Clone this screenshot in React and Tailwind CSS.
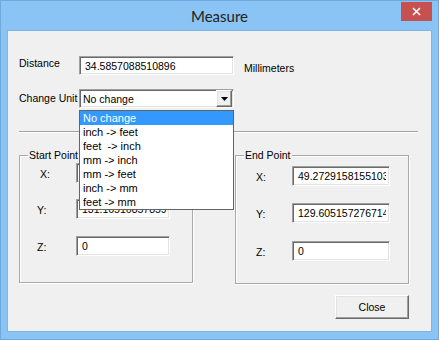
import React from 'react';

// sunken edit box / raised button edges, classic Windows look
const sunken =
  'bg-white border border-t-[#a0a0a0] border-l-[#a0a0a0] border-r-white border-b-white shadow-[inset_1px_1px_0_#696969,inset_-1px_-1px_0_#e3e3e3]';
const raised =
  'bg-[#f0f0f0] border border-t-white border-l-white border-r-[#696969] border-b-[#696969] shadow-[inset_-1px_-1px_0_#a0a0a0,inset_1px_1px_0_#e3e3e3]';

const units = ['No change', 'inch -> feet', 'feet  -> inch', 'mm -> inch', 'mm -> feet', 'inch -> mm', 'feet -> mm'];

const Field = ({ value, className }) => (
  <div className={`${sunken} h-[20px] flex items-center pl-[5px] pr-[3px] pt-[1px] ${className}`}>
    <div className="flex-1 min-w-0 overflow-hidden whitespace-nowrap">{value}</div>
  </div>
);

const Row = ({ label, value, pad, width, className = '' }) => (
  <div className={`flex items-start ${className}`}>
    <div className={`w-[56px] pt-[5px] ${pad}`}>{label}</div>
    <Field value={value} className={width} />
  </div>
);

const Group = ({ title, children, className }) => (
  <div className={`relative w-[174px] border border-[#a9a9a9] shadow-[inset_1px_1px_0_#fff,1px_1px_0_#fff] ${className}`}>
    <div className="absolute -top-[7px] left-[8px] px-[1px] bg-[#f0f0f0] whitespace-nowrap">{title}</div>
    {children}
  </div>
);

export default function App() {
  return (
    <div className="w-[439px] h-[340px] bg-[#89c4f5] border border-[#6fa8dc] flex flex-col font-['Liberation_Sans',Arial,sans-serif] text-[10.5px] leading-[13px] text-black">
      {/* ── Title bar ── */}
      <div className="h-[29px] grid grid-cols-[1fr_auto_1fr] items-center">
        <div />
        <div className="font-['Lato',sans-serif] text-[15px] leading-[18px] text-[#222] pt-[1px]">Measure</div>
        <button className="justify-self-end self-start mt-[1px] mr-[6px] w-[31px] h-[19px] bg-[#c75050] flex items-center justify-center">
          <svg width="9" height="9" viewBox="0 0 9 9">
            <path d="M1 1L8 8M8 1L1 8" stroke="#fff" strokeWidth="1.6" />
          </svg>
        </button>
      </div>

      {/* ── Client area ── */}
      <div className="mx-[6px] mb-[7px] flex-1 border border-[#7fb5e4] bg-[#f0f0f0] flex flex-col pt-[25px]">
        <div className="flex items-start pl-[11px]">
          <div className="w-[60px] pt-[1px]">Distance</div>
          <div className={`${sunken} w-[155px] h-[19px] flex items-center pl-[5px] pt-[1px]`}>34.5857088510896</div>
          <div className="ml-[10px] mt-[6px]">Millimeters</div>
        </div>

        <div className="mt-[14px] flex items-start pl-[11px]">
          <div className="w-[60px] pt-[3px] whitespace-nowrap">Change Unit</div>
          <div className={`${sunken} relative w-[155px] h-[19px] flex`}>
            <div className="flex-1 flex items-center pl-[3px] pt-[1px]">No change</div>
            <div className={`${raised} w-[16px] mr-[1px] flex items-center justify-center`}>
              <svg width="7" height="4" viewBox="0 0 7 4">
                <path d="M0 0H7L3.5 4Z" fill="#000" />
              </svg>
            </div>

            {/* open dropdown list */}
            <div className="absolute -left-[1px] top-[20px] w-[155px] z-10 bg-white border border-[#646464]">
              {units.map((u, i) => (
                <div
                  key={u}
                  className={`h-[14px] leading-[14px] pl-[3px] text-[11px] whitespace-pre ${i === 0 ? 'bg-[#3399ff] text-white' : ''}`}
                >
                  {u}
                </div>
              ))}
            </div>
          </div>
        </div>

        <div className="mt-[23px] ml-[11px] mr-[13px] border-t border-t-[#a0a0a0] border-b border-b-white" />

        <div className="mt-[22px] flex items-start pl-[11px] gap-[42px]">
          <Group title="Start Point" className="h-[128px] pt-[7px]">
            <Row label="X:" value="59.6781935481036" pad="pl-[20px]" width="w-[94px]" />
            <Row label="Y:" value="131.165168578599" pad="pl-[17px]" width="w-[94px]" className="mt-[16px]" />
            <Row label="Z:" value="0" pad="pl-[17px]" width="w-[94px]" className="mt-[17px]" />
          </Group>
          <Group title="End Point" className="h-[129px] pt-[10px]">
            <Row label="X:" value="49.27291581551034" pad="pl-[20px]" width="w-[98px]" />
            <Row label="Y:" value="129.6051572767143" pad="pl-[20px]" width="w-[98px]" className="mt-[17px]" />
            <Row label="Z:" value="0" pad="pl-[20px]" width="w-[98px]" className="mt-[18px]" />
          </Group>
        </div>

        <div className="mt-[11px] flex justify-end pr-[22px]">
          <button className={`${raised} w-[74px] h-[24px] flex items-center justify-center pt-[1px]`}>Close</button>
        </div>
      </div>
    </div>
  );
}
